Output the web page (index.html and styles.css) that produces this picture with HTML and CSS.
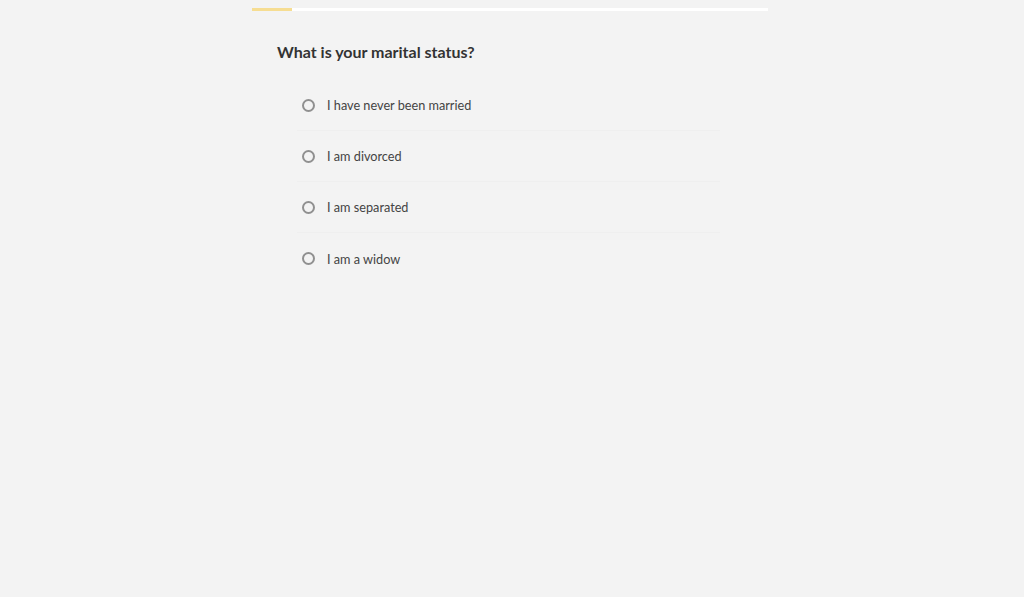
FILE: index.html
```html
<!DOCTYPE html>
<html lang="en">
<head>
<meta charset="utf-8">
<title>Marital status</title>
<link rel="stylesheet" href="styles.css">
</head>
<body>
<div class="page">
  <div class="progress"><div class="progress-fill" style="width: 40px"></div></div>
  <main class="question">
    <h1 class="title">What is your marital status?</h1>
    <ul class="options">
      <li class="option"><span class="radio"></span><span class="label">I have never been married</span></li>
      <li class="option"><span class="radio"></span><span class="label">I am divorced</span></li>
      <li class="option"><span class="radio"></span><span class="label">I am separated</span></li>
      <li class="option"><span class="radio"></span><span class="label">I am a widow</span></li>
    </ul>
  </main>
</div>
</body>
</html>
```

FILE: styles.css
```css
html, body {
  margin: 0;
  padding: 0;
  height: 100%;
}
body {
  background: #f3f3f3;
  font-family: Lato, "Liberation Sans", sans-serif;
  color: #333;
}
.page {
  width: 516px;
  margin-left: 252px;
  padding-top: 8px;
}
.progress {
  height: 3px;
  background: #ffffff;
}
.progress-fill {
  height: 100%;
  background: #f6dd92;
}
.question {
  padding-left: 25px;
}
.title {
  margin: 31px 0 0 0;
  font-size: 16px;
  line-height: 20px;
  font-weight: 700;
  color: #333;
}
.options {
  list-style: none;
  margin: 18px 0 0 20px;
  padding: 0;
  width: 423px;
}
.option {
  display: flex;
  align-items: center;
  box-sizing: border-box;
  height: 51px;
  border-bottom: 1px solid #efefef;
  padding-left: 5px;
}
.option:last-child {
  border-bottom: none;
}
.radio {
  width: 9px;
  height: 9px;
  border: 2px solid #909090;
  border-radius: 50%;
  flex: none;
}
.label {
  margin-left: 12px;
  font-size: 12.7px;
  color: #444;
}
```
